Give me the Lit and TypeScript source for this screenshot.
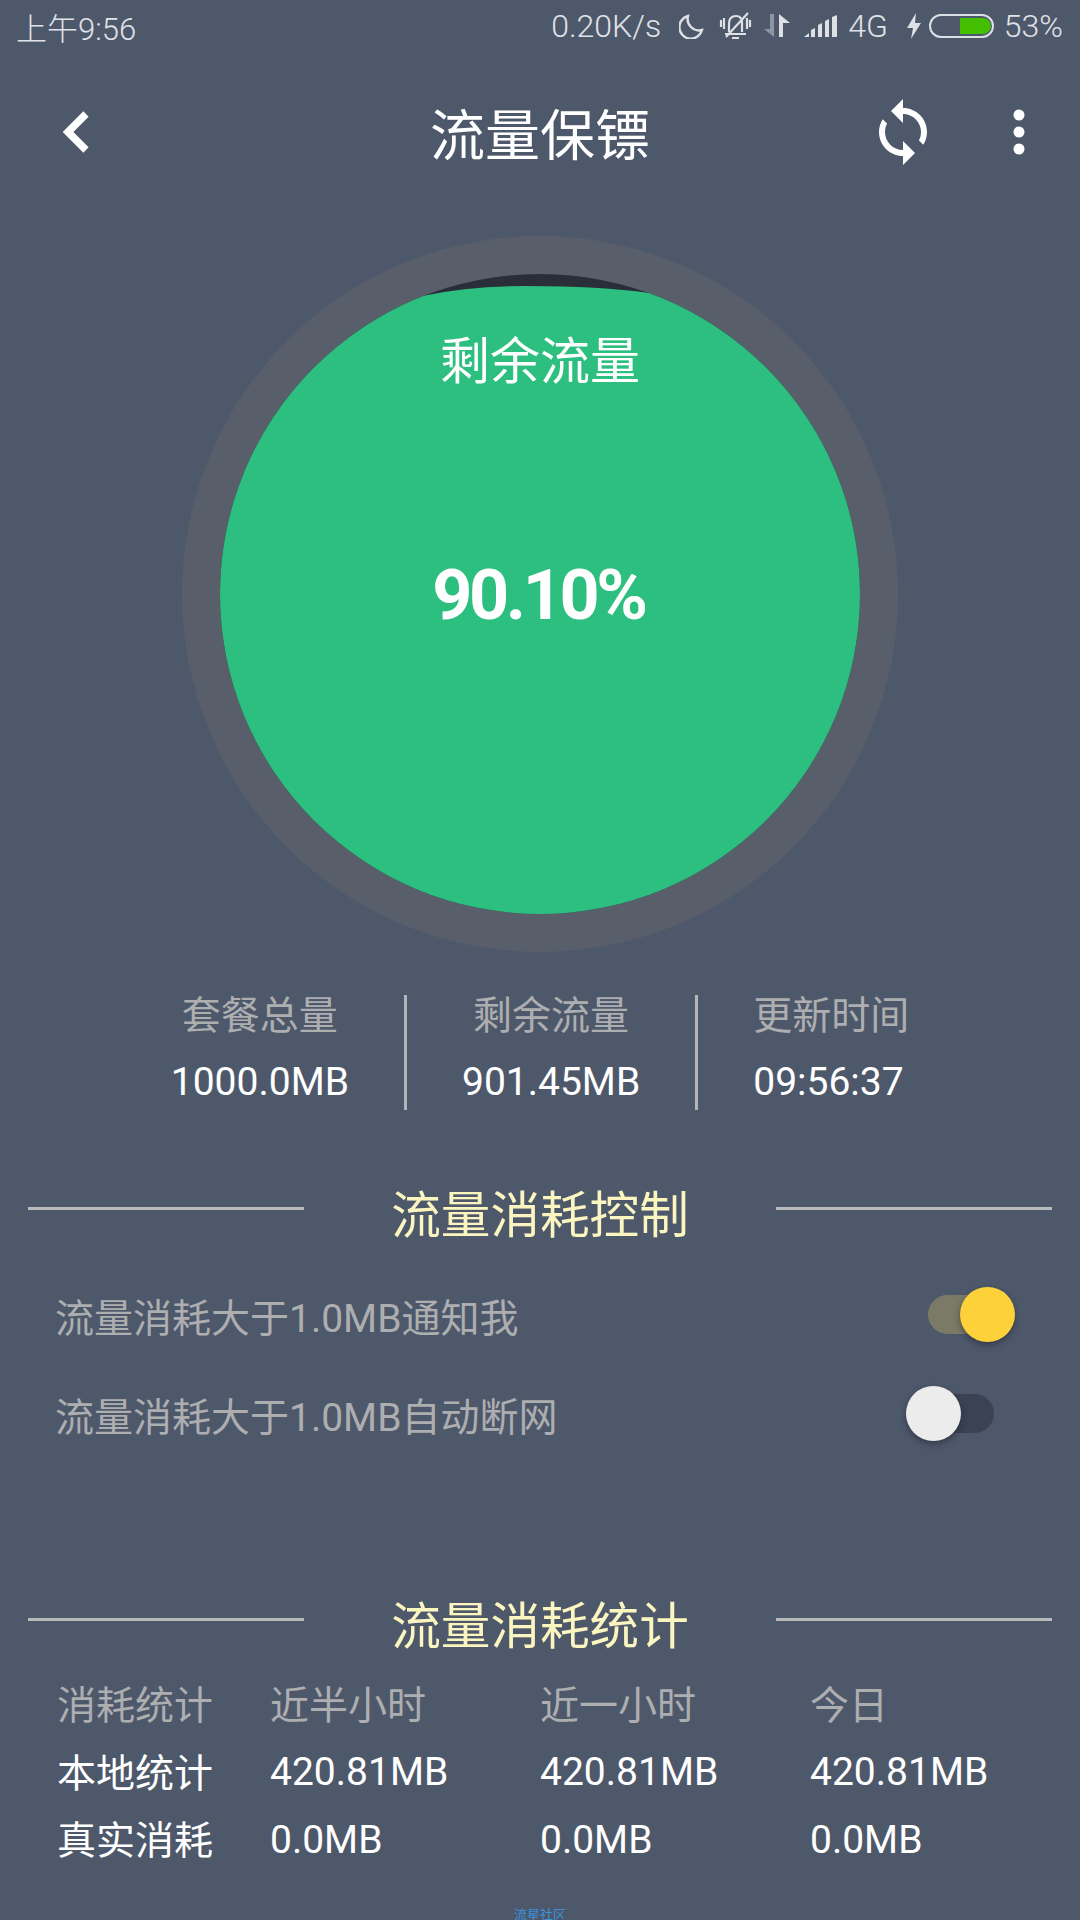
import { LitElement, css, html, svg } from 'lit';
import { customElement } from 'lit/decorators.js';

const stats = [
    { label: '套餐总量', value: '1000.0MB' },
    { label: '剩余流量', value: '901.45MB' },
    { label: '更新时间', value: '09:56:37' }
];

const usage = [
    ['消耗统计', '近半小时', '近一小时', '今日'],
    ['本地统计', '420.81MB', '420.81MB', '420.81MB'],
    ['真实消耗', '0.0MB', '0.0MB', '0.0MB']
];

const signalBars = [
    'M0 22 L5 18 V22 Z',
    'M7 22 V15 L11 13 V22 Z',
    'M14 22 V10 L18 8 V22 Z',
    'M21 22 V6 L25 4 V22 Z',
    'M28 22 V2 L33 0 V22 Z'
];

const isCjk = (text: string) => /[\u4e00-\u9fff]/.test(text);

@customElement('app-root')
export class AppRoot extends LitElement {
    static styles = css`
        :host {
            display: block;
            width: 1080px;
            height: 1920px;
            overflow: hidden;
            background: #4e586b;
            color: #fff;
            font-family: Roboto, "Noto Sans CJK SC", sans-serif;
        }

        .status {
            display: flex;
            align-items: center;
            justify-content: space-between;
            height: 52px;
            padding: 0 17px 6px 16px;
            color: #e0e3e8;
            font-size: 32px;
            font-weight: 300;
        }

        .time {
            font-size: 31px;
        }

        .status-right {
            display: flex;
            align-items: center;
        }

        .status svg {
            display: block;
            fill: none;
            stroke: #dde0e5;
        }

        .moon { width: 25px; height: 25px; margin-left: 18px; stroke-width: 2.4; }
        .bell { width: 33px; height: 30px; margin-left: 15px; stroke-width: 2.2; }
        .arrows { width: 26px; height: 24px; margin-left: 12px; }
        .signal { width: 33px; height: 22px; margin-left: 14px; }
        .net { margin-left: 11px; }
        .bolt { width: 16px; height: 26px; margin-left: 18px; }
        .battery { width: 65px; height: 24px; margin-left: 7px; }
        .pct { margin-left: 10px; }

        .appbar {
            display: flex;
            align-items: center;
            justify-content: center;
            position: relative;
            height: 148px;
            font-size: 55px;
        }

        .appbar-title {
            margin-top: -3px;
        }

        .appbar svg {
            position: absolute;
            top: 50%;
            fill: #fff;
        }

        .back { left: 56px; width: 40px; height: 48px; margin-top: -24px; }
        .sync { left: 867px; width: 72px; height: 72px; margin-top: -36px; }
        .more { left: 1007px; width: 24px; height: 48px; margin-top: -24px; }

        .gauge {
            width: 640px;
            height: 640px;
            margin: 30px auto 0;
            padding: 38px;
            border-radius: 50%;
            background: #595e6b;
        }

        .disc {
            display: flex;
            flex-direction: column;
            align-items: center;
            position: relative;
            height: 640px;
            border-radius: 50%;
            overflow: hidden;
            background: #2a2e38;
        }

        .wave {
            position: absolute;
            inset: 0;
            fill: #2cbf7f;
        }

        .disc-label {
            position: relative;
            margin-top: 58px;
            font-size: 50px;
            line-height: 60px;
        }

        .disc-value {
            position: relative;
            margin-top: 163px;
            padding-right: 3px;
            font-size: 70px;
            font-weight: 700;
            letter-spacing: -3.4px;
            line-height: 80px;
        }

        .stats {
            display: flex;
            justify-content: center;
            height: 115px;
            margin-top: 43px;
        }

        .stat {
            padding: 0 55px;
            text-align: center;
            font-size: 39px;
            line-height: 48px;
        }

        .stat + .stat {
            border-left: 3px solid #b4b5b8;
        }

        .stat:last-child {
            text-align: left;
        }

        .stat-label {
            margin-top: -3px;
            color: #adaeb0;
        }

        .stat-value {
            margin-top: 18px;
        }

        .section {
            display: flex;
            align-items: center;
            gap: 87px;
            height: 60px;
            padding: 0 28px;
            color: #fbf5c0;
            font-size: 49.6px;
        }

        .section::before,
        .section::after {
            content: "";
            flex: 1;
            height: 3px;
            margin-bottom: 6px;
            background: #b9babc;
        }

        .section-control { margin-top: 71px; }
        .section-usage { margin-top: 129px; }

        .rows { margin-top: 24px; }

        .row {
            display: flex;
            align-items: center;
            justify-content: space-between;
            height: 99px;
            padding: 0 86px 0 55px;
            color: #adaeb0;
            font-size: 39px;
        }

        .switch {
            position: relative;
            width: 66px;
            height: 39px;
            border-radius: 20px;
            background: #3a4254;
        }

        .switch.on {
            background: #7a7a66;
        }

        .thumb {
            position: absolute;
            top: -8px;
            left: -22px;
            width: 55px;
            height: 55px;
            border-radius: 50%;
            background: #ececec;
            box-shadow: 0 3px 6px rgba(20, 25, 35, 0.45);
        }

        .on .thumb {
            left: 32px;
            background: #fdd13a;
        }

        .usage {
            display: grid;
            grid-template-columns: 213px 270px 270px 1fr;
            grid-auto-rows: 67.5px;
            align-items: center;
            margin-top: 19px;
            padding-left: 57px;
            font-size: 39px;
        }

        .cjk {
            margin-top: -5px;
        }

        .muted {
            color: #adaeb0;
        }

        .footer {
            margin-top: 32px;
            text-align: center;
            color: #3a92dd;
            font-size: 13px;
            line-height: 18px;
        }
    `;

    private renderStatus() {
        return html`
            <div class="status">
                <span class="time">上午9:56</span>
                <div class="status-right">
                    <span>0.20K/s</span>
                    <svg class="moon" viewBox="0 0 25 25"><path d="M9 2 A11.5 11.5 0 1 0 23 16 A11.5 11.5 0 0 1 9 2 Z"/></svg>
                    <svg class="bell" viewBox="0 0 33 30">
                        <path d="M10 21 V13 Q10 5 17 5 Q23 5 23 12 V21 M6 23 H27 M13 27 H20 M2 9 V16 M5 7 V18 M28 7 V18 M31 9 V16 M7 26 L29 2"/>
                    </svg>
                    <svg class="arrows" viewBox="0 0 26 24">
                        <path d="M6 0 H10 V23 L0 15 H6 Z" fill="#8d94a2" stroke="none"/>
                        <path d="M15 0 L26 9 H19 V23 H15 Z" fill="#dde0e5" stroke="none"/>
                    </svg>
                    <svg class="signal" viewBox="0 0 33 22">
                        ${signalBars.map((d) => svg`<path d=${d} fill="#dde0e5" stroke="none"/>`)}
                    </svg>
                    <span class="net">4G</span>
                    <svg class="bolt" viewBox="0 0 16 26"><path d="M10 0 L1 15 H7 L5 26 L15 10 H9 Z" fill="#dde0e5" stroke="none"/></svg>
                    <svg class="battery" viewBox="0 0 65 24">
                        <rect x="1" y="1" width="63" height="22" rx="11" stroke-width="2"/>
                        <path d="M31 4 H53 A8 8 0 0 1 62 12 A8 8 0 0 1 53 20 H31 Z" fill="#43be00" stroke="none"/>
                    </svg>
                    <span class="pct">53%</span>
                </div>
            </div>
        `;
    }

    private renderAppbar() {
        return html`
            <div class="appbar">
                <svg class="back" viewBox="0 0 40 48">
                    <path d="M30 6 L12 24 L30 42" fill="none" stroke="#fff" stroke-width="7.5"/>
                </svg>
                <span class="appbar-title">流量保镖</span>
                <svg class="sync" viewBox="0 0 24 24">
                    <path d="M12 4V1L8 5l4 4V6c3.31 0 6 2.69 6 6 0 1.01-.25 1.97-.7 2.8l1.46 1.46C19.54 15.03 20 13.57 20 12c0-4.42-3.58-8-8-8zm0 14c-3.31 0-6-2.69-6-6 0-1.01.25-1.97.7-2.8L5.24 7.74C4.46 8.97 4 10.43 4 12c0 4.42 3.58 8 8 8v3l4-4-4-4v3z"/>
                </svg>
                <svg class="more" viewBox="0 0 24 48">
                    <circle cx="12" cy="7" r="5.5"/>
                    <circle cx="12" cy="24" r="5.5"/>
                    <circle cx="12" cy="41" r="5.5"/>
                </svg>
            </div>
        `;
    }

    private renderGauge() {
        return html`
            <div class="gauge">
                <div class="disc">
                    <svg class="wave" viewBox="0 0 640 640">
                        <path d="M0 22 H202 Q250 12 307 12 Q380 12 429 19 L640 19 V640 H0 Z"/>
                    </svg>
                    <div class="disc-label">剩余流量</div>
                    <div class="disc-value">90.10%</div>
                </div>
            </div>
        `;
    }

    private renderSwitch(on: boolean) {
        return html`<div class="switch ${on ? 'on' : ''}"><div class="thumb"></div></div>`;
    }

    protected render() {
        return html`
            ${this.renderStatus()}
            ${this.renderAppbar()}
            ${this.renderGauge()}
            <div class="stats">
                ${stats.map((s) => html`
                    <div class="stat">
                        <div class="stat-label">${s.label}</div>
                        <div class="stat-value">${s.value}</div>
                    </div>
                `)}
            </div>
            <div class="section section-control">流量消耗控制</div>
            <div class="rows">
                <div class="row">流量消耗大于1.0MB通知我 ${this.renderSwitch(true)}</div>
                <div class="row">流量消耗大于1.0MB自动断网 ${this.renderSwitch(false)}</div>
            </div>
            <div class="section section-usage">流量消耗统计</div>
            <div class="usage">
                ${usage.map((row, i) => row.map((cell) => html`
                    <div class="${i === 0 ? 'muted' : ''} ${isCjk(cell) ? 'cjk' : ''}">${cell}</div>
                `))}
            </div>
            <div class="footer">流星社区</div>
        `;
    }
}
